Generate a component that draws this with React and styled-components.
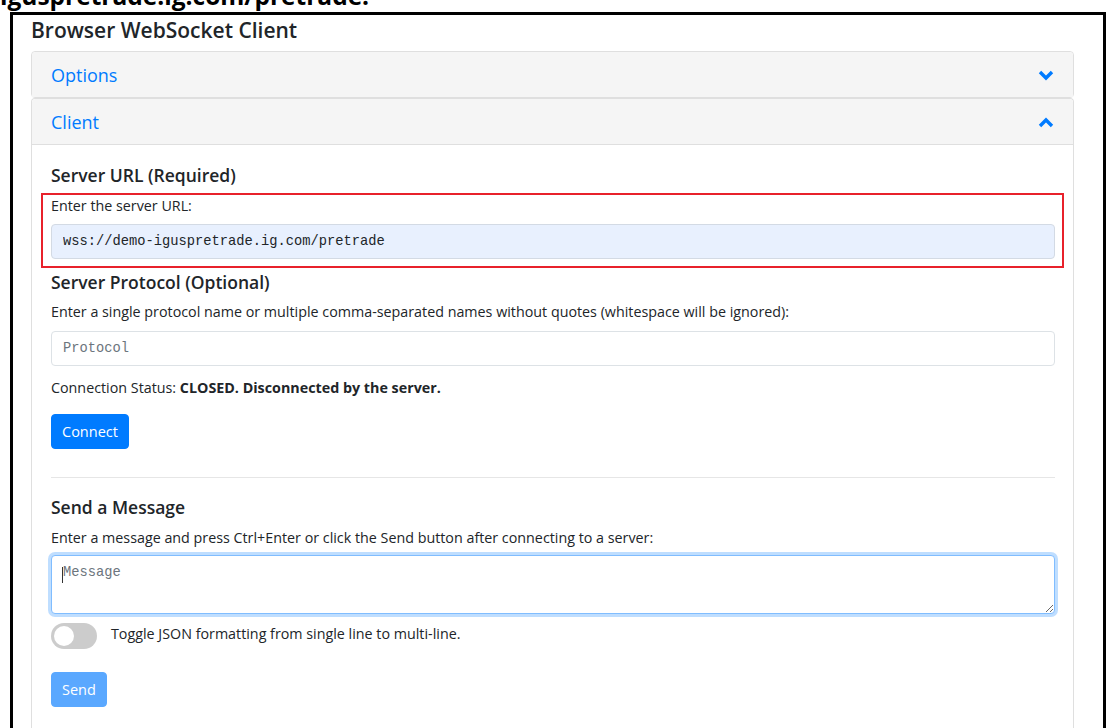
import React from 'react'
import styled, { createGlobalStyle } from 'styled-components'

const GlobalStyle = createGlobalStyle`
  html, body {
    margin: 0;
    height: 728px;
    overflow: hidden;
    background: #fff;
  }
  body {
    font-family: "Open Sans", "Noto Sans", sans-serif;
    color: #212529;
  }
`;

const Caption = styled.div`
  margin-top: -16px;
  height: 28px;
  font-size: 24.5px;
  line-height: 24px;
  font-weight: 700;
  color: #000;
  white-space: nowrap;
  overflow: hidden;
`;

const Frame = styled.div`
  margin: 0 3px 0 10px;
  border: 3px solid #000;
  border-bottom: 0;
  padding: 3px 29px 0 18px;
  height: 760px;
`;

const Title = styled.h1`
  margin: 0 0 9px 0;
  font-size: 21px;
  line-height: 24px;
  font-weight: 600;
  color: #212529;
`;

const Card = styled.div`
  border: 1px solid #dfdfdf;
  border-radius: ${p => (p.$last ? '4px 4px 0 0' : '4px')};
  ${p => p.$last && 'border-bottom: 0;'}
  background: #fff;
`;

const CardHeader = styled.div`
  display: flex;
  align-items: center;
  justify-content: space-between;
  padding: 11px 19px 10px 19px;
  background: #f5f5f5;
  border-radius: 4px 4px 0 0;
  ${p => p.$open && 'border-bottom: 1px solid #dfdfdf;'}
`;

const HeaderTitle = styled.span`
  font-size: 18px;
  line-height: 24px;
  font-weight: 500;
  color: #007bff;
`;

const Chevron = styled.svg`
  width: 16px;
  height: 11px;
  fill: none;
  stroke: #007bff;
  stroke-width: 3.4;
`;

const CardBody = styled.div`
  padding: 20px 18px 20px 19px;
  height: 700px;
`;

const SectionTitle = styled.h2`
  margin: ${p => p.$top || 0} 0 8px 0;
  font-size: 17.5px;
  line-height: 21.6px;
  font-weight: 600;
`;

const HelpText = styled.div`
  margin: 0 0 ${p => p.$gap || '8px'} 0;
  font-size: 14.3px;
  line-height: 21px;
  color: #212529;
`;

const Highlight = styled.div`
  margin: -2px -9px 0 -10px;
  padding: 0 7px 7px 8px;
  border: 2px solid #e8212b;
`;

const TextInput = styled.input`
  display: block;
  box-sizing: border-box;
  width: 100%;
  height: 35px;
  margin: 0;
  padding: 0 11px;
  font-family: "Liberation Mono", "DejaVu Sans Mono", monospace;
  font-size: 13.75px;
  color: #212529;
  background: ${p => (p.$filled ? '#e8f0fe' : '#fff')};
  border: 1px solid ${p => (p.$filled ? '#d3dae4' : '#dde2e6')};
  border-radius: 4px;
  outline: none;
  &::placeholder {
    color: #6c757d;
  }
`;

const Status = styled.div`
  margin: 11px 0 16px 0;
  font-size: 14.3px;
  line-height: 21px;
  b {
    font-weight: 700;
  }
`;

const Button = styled.button`
  display: block;
  height: 35px;
  padding: 0 10px;
  margin: ${p => p.$top || 0} 0 0 0;
  font-family: inherit;
  font-size: 14.5px;
  color: #fff;
  background: ${p => (p.disabled ? '#5aa8ff' : '#007bff')};
  border: 1px solid ${p => (p.disabled ? '#5aa8ff' : '#007bff')};
  border-radius: 4px;
`;

const Divider = styled.hr`
  margin: 28px 0 0 0;
  border: 0;
  border-top: 1px solid #e6e6e6;
`;

const MessageBox = styled.div`
  position: relative;
  margin-top: 7px;
`;

const TextArea = styled.textarea`
  display: block;
  box-sizing: border-box;
  width: 100%;
  height: 59px;
  margin: 0;
  padding: 9px 11px;
  font-family: "Liberation Mono", "DejaVu Sans Mono", monospace;
  font-size: 13.75px;
  border: 1px solid #80bdff;
  border-radius: 4px;
  box-shadow: 0 0 0 3px rgba(0, 123, 255, 0.25);
  outline: none;
  resize: vertical;
  &::placeholder {
    color: #6c757d;
  }
`;

const Caret = styled.span`
  position: absolute;
  left: 11px;
  top: 12px;
  width: 1px;
  height: 16px;
  background: #333;
`;

const ToggleRow = styled.div`
  display: flex;
  align-items: center;
  gap: 14px;
  margin-top: 9px;
`;

const Switch = styled.span`
  position: relative;
  width: 46px;
  height: 26px;
  border-radius: 13px;
  background: #cccccc;
  flex-shrink: 0;
`;

const Knob = styled.span`
  position: absolute;
  left: 3px;
  top: 3px;
  width: 20px;
  height: 20px;
  border-radius: 50%;
  background: #fff;
`;

const ToggleLabel = styled.span`
  font-size: 14.3px;
  line-height: 21px;
  margin-top: -4px;
`;

const ChevronDown = () => (
  <Chevron viewBox="0 0 16 11">
    <polyline points="2,2 8,8 14,2" />
  </Chevron>
);

const ChevronUp = () => (
  <Chevron viewBox="0 0 16 11">
    <polyline points="2,9 8,3 14,9" />
  </Chevron>
);

const App = () => {
  return (
    <>
      <GlobalStyle />
      <Caption>iguspretrade.ig.com/pretrade:</Caption>
      <Frame>
        <Title>Browser WebSocket Client</Title>
        <Card>
          <CardHeader>
            <HeaderTitle>Options</HeaderTitle>
            <ChevronDown />
          </CardHeader>
        </Card>
        <Card $last>
          <CardHeader $open>
            <HeaderTitle>Client</HeaderTitle>
            <ChevronUp />
          </CardHeader>
          <CardBody>
            <SectionTitle>Server URL (Required)</SectionTitle>
            <Highlight>
              <HelpText>Enter the server URL:</HelpText>
              <TextInput $filled readOnly value="wss://demo-iguspretrade.ig.com/pretrade" />
            </Highlight>
            <SectionTitle $top="4px">Server Protocol (Optional)</SectionTitle>
            <HelpText $gap="9px">
              Enter a single protocol name or multiple comma-separated names without quotes (whitespace will be ignored):
            </HelpText>
            <TextInput placeholder="Protocol" />
            <Status>
              Connection Status: <b>CLOSED. Disconnected by the server.</b>
            </Status>
            <Button>Connect</Button>
            <Divider />
            <SectionTitle $top="19px">Send a Message</SectionTitle>
            <HelpText $gap="0">
              Enter a message and press Ctrl+Enter or click the Send button after connecting to a server:
            </HelpText>
            <MessageBox>
              <TextArea placeholder="Message" />
              <Caret />
            </MessageBox>
            <ToggleRow>
              <Switch>
                <Knob />
              </Switch>
              <ToggleLabel>Toggle JSON formatting from single line to multi-line.</ToggleLabel>
            </ToggleRow>
            <Button disabled $top="23px">Send</Button>
          </CardBody>
        </Card>
      </Frame>
    </>
  )
}

export default App
